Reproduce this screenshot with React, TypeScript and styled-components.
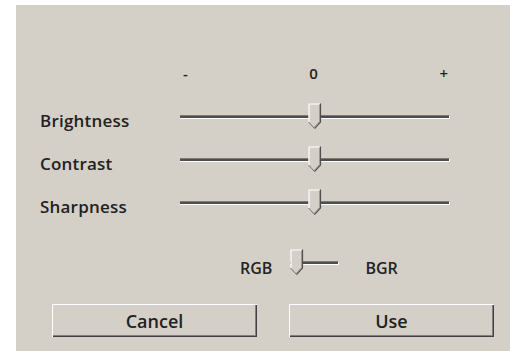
import { createGlobalStyle } from "styled-components";
import styled from "styled-components";

const GlobalStyle = createGlobalStyle`
    html, body {
        margin: 0;
        padding: 0;
        background: #ffffff;
    }
    body {
        font-family: "Open Sans", "DejaVu Sans", sans-serif;
        font-weight: 600;
        color: #222222;
    }
`;

const Panel = styled.div`
    margin: 5px 0 0 16px;
    height: 346px;
    background: #d4d0c8;
    display: flex;
    flex-direction: column;
`;

const Grid = styled.div`
    display: grid;
    grid-template-columns: 140px 270px;
    padding: 54px 0 0 24px;
`;

const Scale = styled.div`
    grid-column: 2;
    display: flex;
    justify-content: space-between;
    height: 28px;
    margin-bottom: 8px;
    align-items: center;
    padding: 0 2px 0 3px;
    font-size: 15px;
`;

const Label = styled.div`
    height: 43px;
    display: flex;
    align-items: center;
    padding-top: 8px;
    box-sizing: border-box;
    font-size: 17px;
    letter-spacing: 0.2px;
`;

const SliderBox = styled.div<{ $width: number }>`
    position: relative;
    width: ${(p) => p.$width}px;
    height: 43px;
`;

const Track = styled.div`
    position: absolute;
    left: 0;
    right: 0;
    top: 20px;
    height: 2px;
    background: #4e4e4e;
    border-top: 1px solid #7a7a7a;
    border-bottom: 1px solid #ffffff;
    border-right: 1px solid #ffffff;
`;

const ThumbWrap = styled.div<{ $top: number }>`
    position: absolute;
    top: ${(p) => p.$top}px;
    width: 14px;
    height: 27px;
`;

const SwapRow = styled.div`
    display: flex;
    align-items: center;
    margin-top: 17px;
    padding-left: 224px;
    font-size: 16px;
`;

const SwapLabel = styled.span<{ $gap: number }>`
    margin-right: ${(p) => p.$gap}px;
    padding-top: 10px;
`;

const Buttons = styled.div`
    display: flex;
    gap: 32px;
    padding-left: 36px;
    margin-top: 20px;
`;

const Button = styled.button`
    width: 205px;
    height: 33px;
    background: #d4d0c8;
    border: none;
    box-shadow: inset 1px 1px 0 #ffffff, inset -1px -1px 0 #404040,
        inset -2px -2px 0 #808080;
    font-family: "Open Sans", "DejaVu Sans", sans-serif;
    font-weight: 600;
    font-size: 18px;
    color: #222222;
    padding: 0;
`;

function Thumb() {
    return (
        <svg width="14" height="27" viewBox="0 0 14 27">
            <polygon points="0.5,0.5 12.5,0.5 12.5,19 6.5,25.5 0.5,19" fill="#d4d0c8" />
            <polyline points="1,19 1,1 12,1" fill="none" stroke="#ffffff" strokeWidth="1.2" />
            <polyline points="12.5,0.5 12.5,19 6.5,25.5" fill="none" stroke="#505050" strokeWidth="1.2" />
            <polyline points="11.5,1.5 11.5,18.5 6.5,24" fill="none" stroke="#9a9a9a" strokeWidth="1" />
            <polyline points="0.5,19 6.5,25.5" fill="none" stroke="#707070" strokeWidth="1" />
        </svg>
    );
}

function Slider({ width, value, thumbTop }: { width: number; value: number; thumbTop: number }) {
    const left = Math.round((width - 14) * value);
    return (
        <SliderBox $width={width}>
            <Track />
            <ThumbWrap $top={thumbTop} style={{ left }}>
                <Thumb />
            </ThumbWrap>
        </SliderBox>
    );
}

const rows = ["Brightness", "Contrast", "Sharpness"];

export default function App() {
    return (
        <>
            <GlobalStyle />
            <Panel>
                <Grid>
                    <Scale>
                        <span>-</span>
                        <span>0</span>
                        <span>+</span>
                    </Scale>
                    {rows.map((name) => [
                        <Label key={name}>{name}</Label>,
                        <Slider key={name + "-s"} width={270} value={0.5} thumbTop={8} />,
                    ])}
                </Grid>
                <SwapRow>
                    <SwapLabel $gap={18}>RGB</SwapLabel>
                    <Slider width={49} value={0} thumbTop={8} />
                    <SwapLabel $gap={0} style={{ marginLeft: 26 }}>BGR</SwapLabel>
                </SwapRow>
                <Buttons>
                    <Button>Cancel</Button>
                    <Button>Use</Button>
                </Buttons>
            </Panel>
        </>
    );
}
